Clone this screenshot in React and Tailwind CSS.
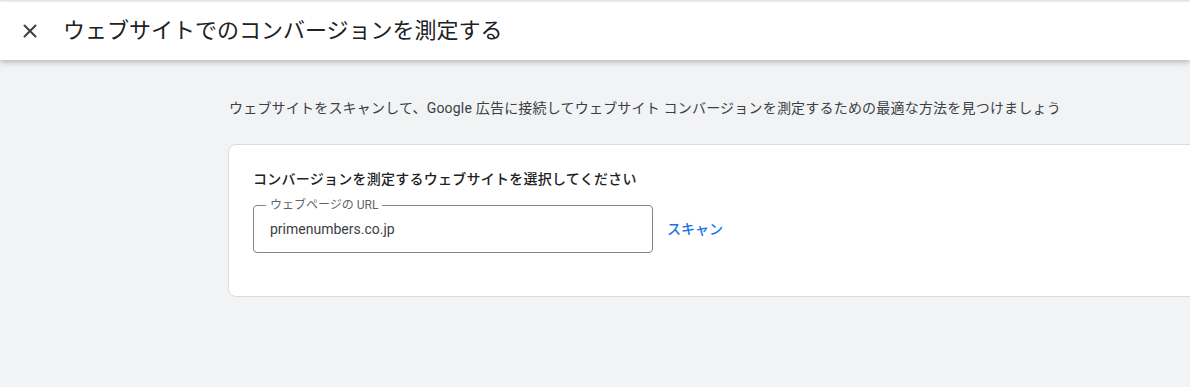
import { X } from "lucide-react";

const FONT = { fontFamily: 'Roboto, "Noto Sans CJK JP", sans-serif' };

export default function App() {
  return (
    <div className="w-[1190px] h-[387px] overflow-hidden bg-[#f1f3f4] text-[#202124]" style={FONT}>
      {/* Header */}
      <div className="h-[2px] bg-gradient-to-b from-[#e8e8e8] to-white" />
      <header className="relative z-10 flex h-[58px] items-center bg-white shadow-[0_2px_6px_rgba(60,64,67,0.35)]">
        <button className="ml-[18px] flex h-6 w-6 items-center justify-center text-[#3c4043]">
          <X size={22} strokeWidth={2.2} />
        </button>
        <h1 className="ml-[21px] text-[22px] leading-none text-[#202124]">
          ウェブサイトでのコンバージョンを測定する
        </h1>
      </header>

      {/* Body */}
      <main className="pl-[228px] pt-[38px]">
        <p className="pl-[1px] text-[14px] leading-5 tracking-[0.2px] text-[#3c4043]">
          ウェブサイトをスキャンして、Google 広告に接続してウェブサイト コンバージョンを測定するための最適な方法を見つけましょう
        </p>

        <section className="mt-[26px] w-[1000px] rounded-lg border border-[#dadce0] bg-white pb-[43px] pl-[24px] pt-[24px]">
          <h2 className="text-[14px] font-medium leading-5 tracking-[0.25px] text-[#202124]">
            コンバージョンを測定するウェブサイトを選択してください
          </h2>

          <div className="mt-[16px] flex items-center">
            <div className="relative flex h-[48px] w-[400px] items-center rounded border border-[#80868b] px-[16px]">
              <span className="absolute -top-[7px] left-[12px] bg-white px-[4px] text-[12px] leading-[12px] text-[#5f6368]">
                ウェブページの URL
              </span>
              <span className="text-[14px] leading-5 text-[#3c4043]">primenumbers.co.jp</span>
            </div>
            <button className="ml-[14px] text-[14px] font-medium text-[#1a73e8]">スキャン</button>
          </div>
        </section>
      </main>
    </div>
  );
}
